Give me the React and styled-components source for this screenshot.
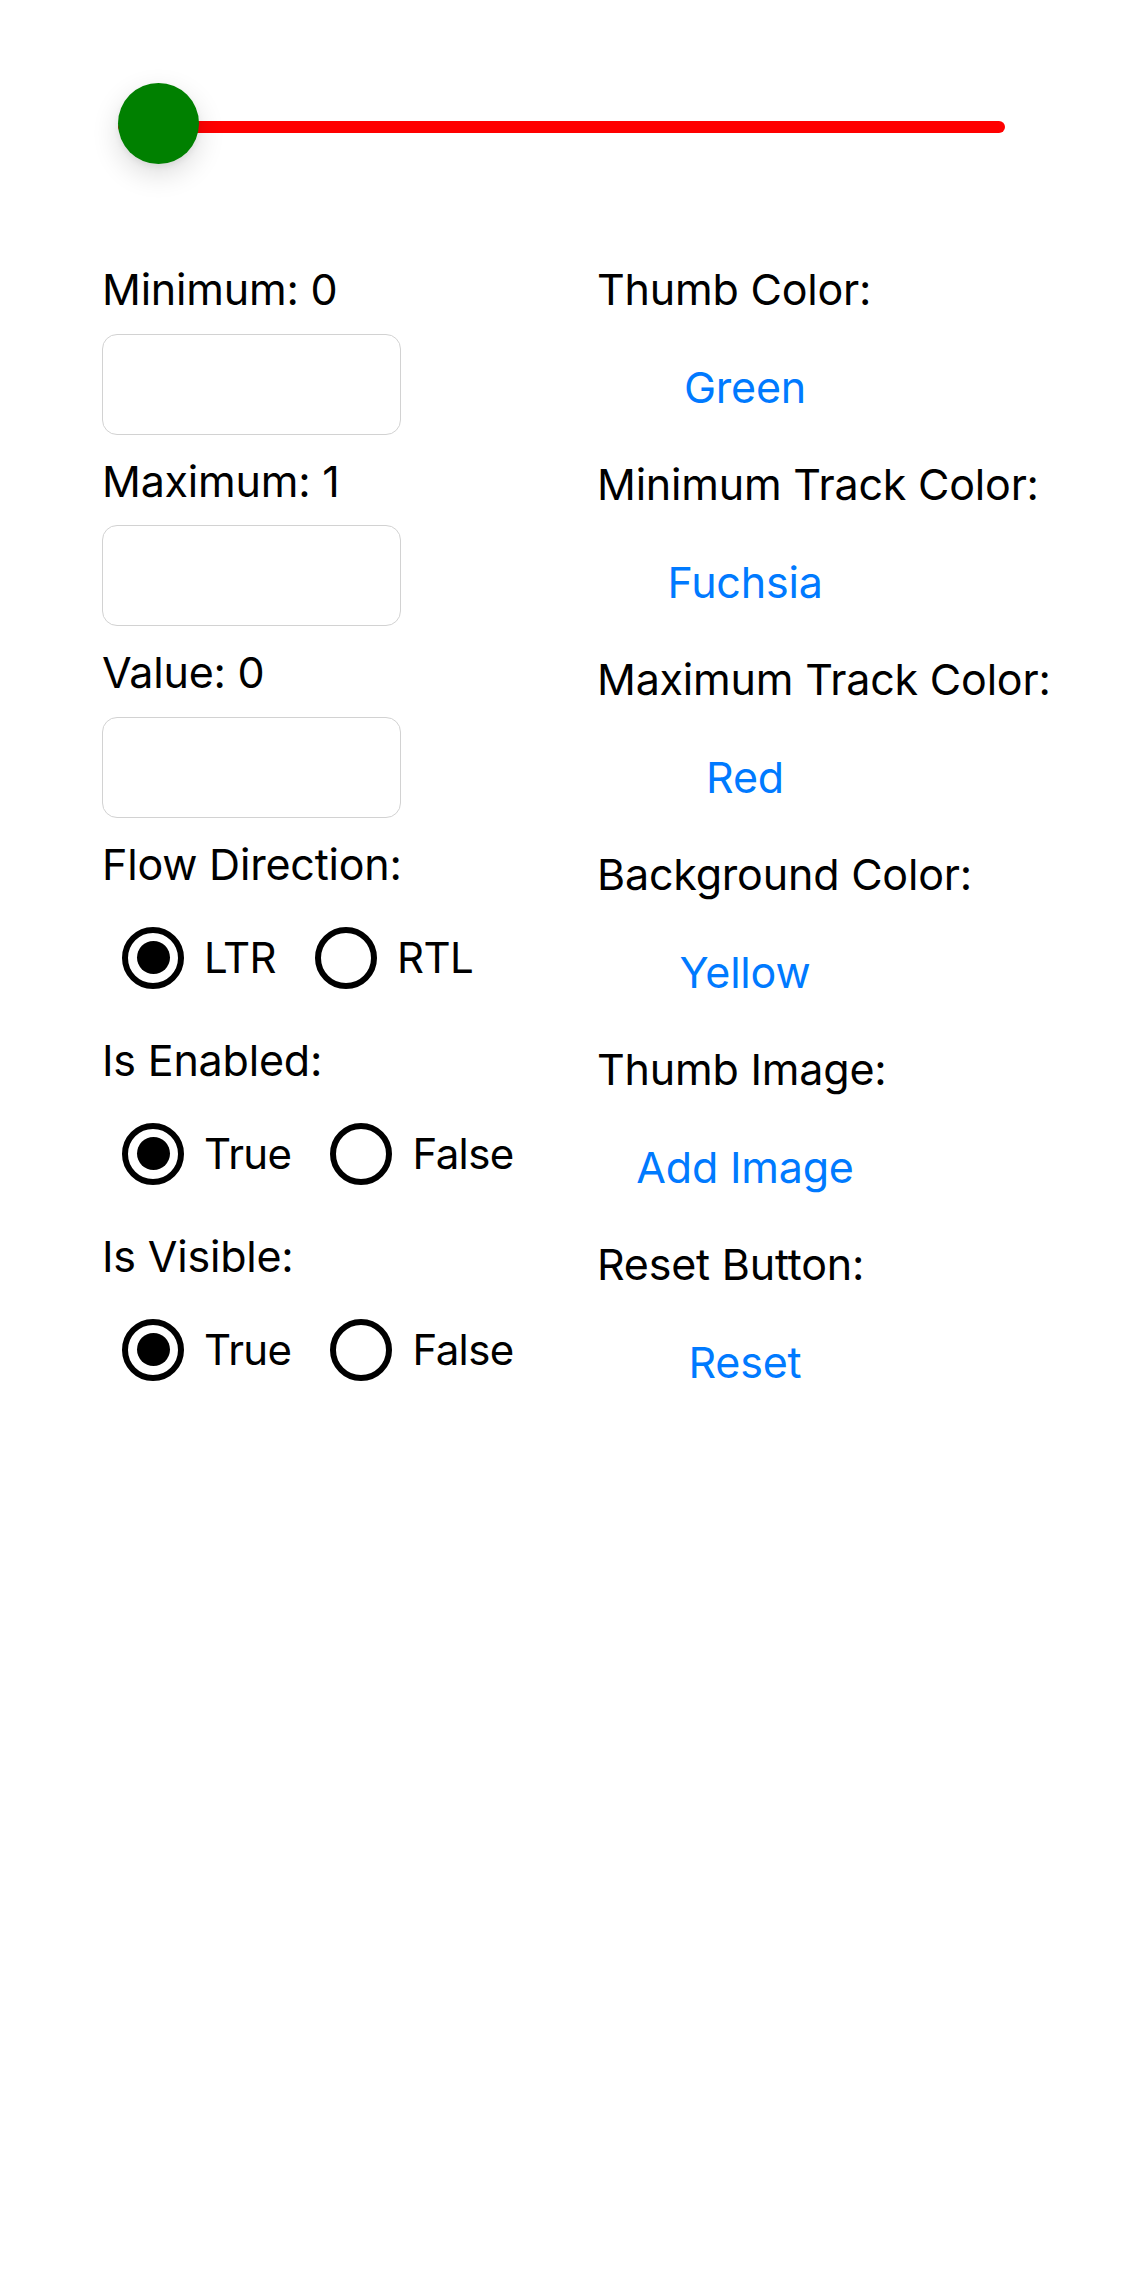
import React, { useState } from 'react'
import styled, { createGlobalStyle } from 'styled-components'

const GlobalStyle = createGlobalStyle`
  html, body {
    margin: 0;
    padding: 0;
    background: #ffffff;
  }
  body {
    font-family: Inter, "Noto Sans", "Liberation Sans", sans-serif;
    color: #000000;
  }
`

const Page = styled.main`
  min-height: 100vh;
  background: #ffffff;
  padding-top: 83px;
  box-sizing: border-box;
`

const SliderWrap = styled.div`
  position: relative;
  display: flex;
  flex-direction: column;
  margin-left: 118px;
  width: 887px;
  height: 81px;
`

const Track = styled.div`
  margin-top: 38px;
  height: 12px;
  border-radius: 6px;
  background: ${(p) => p.$color};
`

const Thumb = styled.div`
  position: absolute;
  top: 0;
  left: ${(p) => p.$offset}px;
  width: 81px;
  height: 81px;
  border-radius: 50%;
  background: ${(p) => p.$color};
  box-shadow: 0 10px 28px rgba(0, 0, 0, 0.14), 0 3px 6px rgba(0, 0, 0, 0.06);
`

const Columns = styled.div`
  display: grid;
  grid-template-columns: 495px 296px;
  padding-left: 102px;
  margin-top: 98px;
`

const Column = styled.section`
  display: flex;
  flex-direction: column;
`

const Label = styled.div`
  font-size: 43px;
  line-height: 54px;
  height: 54px;
  white-space: nowrap;
  letter-spacing: -0.2px;
`

const NumberInput = styled.input`
  display: block;
  box-sizing: border-box;
  width: 299px;
  height: 101px;
  margin: 17.5px 0 19px;
  border: 1.5px solid #d2d2d2;
  border-radius: 15px;
  background: #ffffff;
  font: inherit;
  font-size: 43px;
  padding: 0 16px;
  outline: none;
`

const RadioRow = styled.div`
  display: flex;
  align-items: center;
  height: 62px;
  margin: 36px 0 44px;
  padding-left: 20px;
`

const RadioItem = styled.label`
  display: flex;
  align-items: center;
  gap: 20px;
  margin-right: 39px;
  font-size: 42px;
  line-height: 54px;
  letter-spacing: -0.6px;
  cursor: pointer;
`

const RadioCircle = styled.span`
  display: grid;
  place-items: center;
  box-sizing: border-box;
  width: 62px;
  height: 62px;
  border: 6px solid #000000;
  border-radius: 50%;

  &::after {
    content: '';
    width: 33px;
    height: 33px;
    border-radius: 50%;
    background: ${(p) => (p.$checked ? '#000000' : 'transparent')};
  }
`

const LinkButton = styled.button`
  display: block;
  width: 100%;
  margin: 43.5px 0;
  padding: 0;
  border: none;
  background: none;
  color: #007aff;
  font: inherit;
  font-size: 43px;
  line-height: 54px;
  height: 54px;
  text-align: center;
  letter-spacing: -0.2px;
  cursor: pointer;
`

const Field = ({ label }) => (
  <div>
    <Label>{label}</Label>
    <NumberInput type="text" />
  </div>
)

const RadioGroup = ({ label, options, value, onChange }) => (
  <div>
    <Label>{label}</Label>
    <RadioRow>
      {options.map((opt) => (
        <RadioItem key={opt} onClick={() => onChange(opt)}>
          <RadioCircle $checked={opt === value} />
          {opt}
        </RadioItem>
      ))}
    </RadioRow>
  </div>
)

const Setting = ({ label, action }) => (
  <div>
    <Label>{label}</Label>
    <LinkButton type="button">{action}</LinkButton>
  </div>
)

const settings = [
  ['Thumb Color:', 'Green'],
  ['Minimum Track Color:', 'Fuchsia'],
  ['Maximum Track Color:', 'Red'],
  ['Background Color:', 'Yellow'],
  ['Thumb Image:', 'Add Image'],
  ['Reset Button:', 'Reset'],
]

const App = () => {
  const [flow, setFlow] = useState('LTR')
  const [enabled, setEnabled] = useState('True')
  const [visible, setVisible] = useState('True')

  return <>
    <GlobalStyle />
    <Page>
      <SliderWrap>
        <Track $color="#ff0000" />
        <Thumb $color="#008000" $offset={0} />
      </SliderWrap>
      <Columns>
        <Column>
          <Field label="Minimum: 0" />
          <Field label="Maximum: 1" />
          <Field label="Value: 0" />
          <RadioGroup label="Flow Direction:" options={['LTR', 'RTL']} value={flow} onChange={setFlow} />
          <RadioGroup label="Is Enabled:" options={['True', 'False']} value={enabled} onChange={setEnabled} />
          <RadioGroup label="Is Visible:" options={['True', 'False']} value={visible} onChange={setVisible} />
        </Column>
        <Column>
          {settings.map(([label, action]) => (
            <Setting key={label} label={label} action={action} />
          ))}
        </Column>
      </Columns>
    </Page>
  </>
}

export default App
